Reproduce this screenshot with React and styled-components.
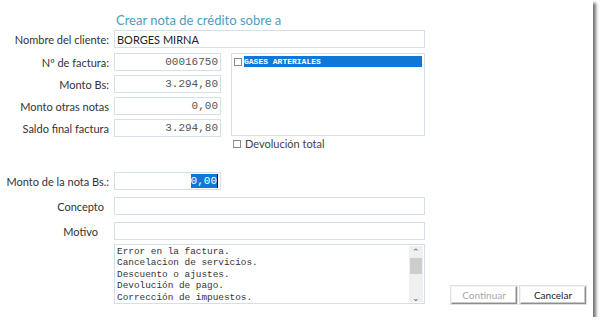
import React from 'react';
import styled, { createGlobalStyle } from 'styled-components';

const Global = createGlobalStyle`
  html, body { margin: 0; background: #fff; }
  body { font-family: "Lato", "Noto Sans", sans-serif; }
`;

const motivos = [
  'Error en la factura.',
  'Cancelacion de servicios.',
  'Descuento o ajustes.',
  'Devolución de pago.',
  'Corrección de impuestos.',
];

const amounts = [
  { label: 'Nº de factura:', value: '00016750' },
  { label: 'Monto Bs:', value: '3.294,80' },
  { label: 'Monto otras notas', value: '0,00' },
  { label: 'Saldo final factura', value: '3.294,80' },
];

export default function App() {
  return (
    <>
      <Global />
      <Window>
        <Title>Crear nota de crédito sobre a</Title>
        <Row>
          <Label>Nombre del cliente:</Label>
          <TextBox wide>BORGES MIRNA</TextBox>
        </Row>
        <Upper>
          <Column>
            {amounts.map((a) => (
              <Row key={a.label}>
                <Label>{a.label}</Label>
                <NumberBox>{a.value}</NumberBox>
              </Row>
            ))}
          </Column>
          <Side>
            <ListBox>
              <ListItem>
                <SmallCheck />
                <Selected>GASES ARTERIALES</Selected>
              </ListItem>
            </ListBox>
            <CheckRow>
              <SmallCheck />
              <span>Devolución total</span>
            </CheckRow>
          </Side>
        </Upper>
        <Lower>
          <Row>
            <Label>Monto de la nota Bs.:</Label>
            <NumberBox>
              <Highlight>0,0</Highlight>
              <Highlight last>0</Highlight>
            </NumberBox>
          </Row>
          <Row>
            <Label pad={5}>Concepto</Label>
            <TextBox wide />
          </Row>
          <Row>
            <Label pad={11}>Motivo</Label>
            <TextBox wide />
          </Row>
          <Bottom>
            <TextArea>
              <Lines>
                {motivos.map((m) => (
                  <div key={m}>{m}</div>
                ))}
              </Lines>
              <ScrollBar>
                <Arrow>⌃</Arrow>
                <Thumb />
                <Spacer />
                <Arrow>⌄</Arrow>
              </ScrollBar>
            </TextArea>
            <Buttons>
              <Button disabled>Continuar</Button>
              <Button>Cancelar</Button>
            </Buttons>
          </Bottom>
        </Lower>
      </Window>
    </>
  );
}

const Window = styled.div`
  width: 593px;
  height: 317px;
  box-sizing: border-box;
  background: #fff;
  box-shadow: 3px 3px 3px rgba(0, 0, 0, 0.55);
  padding: 12px 0 0 0;
  display: flex;
  flex-direction: column;
`;

const Title = styled.div`
  margin-left: 116px;
  color: #4a9fbc;
  font-size: 13px;
  line-height: 16px;
  margin-bottom: 2px;
`;

const Row = styled.div`
  display: flex;
  align-items: center;
  height: 18px;
`;

const Label = styled.div`
  width: 114px;
  box-sizing: border-box;
  padding-right: ${(p) => (p.pad || 0) + 5}px;
  text-align: right;
  font-size: 11px;
  color: #333;
  white-space: nowrap;
`;

const Field = styled.div`
  box-sizing: border-box;
  height: 18px;
  border: 1px solid #d6dee6;
  background: #fff;
  display: flex;
  align-items: center;
`;

const TextBox = styled(Field)`
  width: ${(p) => (p.wide ? 311 : 107)}px;
  padding-left: 2px;
  font-size: 11px;
  color: #222;
`;

const NumberBox = styled(Field)`
  width: 107px;
  justify-content: flex-end;
  padding-right: 2px;
  font-family: "Liberation Mono", monospace;
  font-size: 11px;
  color: #555;
`;

const Highlight = styled.span`
  background: #0f78d6;
  color: #fff;
  line-height: 14px;
  ${(p) => p.last && 'border-right: 1px solid #111;'}
`;

const Upper = styled.div`
  display: flex;
  margin-top: 5px;
`;

const Column = styled.div`
  display: flex;
  flex-direction: column;
  gap: 4px;
`;

const Side = styled.div`
  margin-left: 10px;
  display: flex;
  flex-direction: column;
`;

const ListBox = styled.div`
  width: 194px;
  height: 83px;
  box-sizing: border-box;
  border: 1px solid #d6dee6;
  padding: 2px 2px 0 2px;
`;

const ListItem = styled.div`
  display: flex;
  align-items: center;
  height: 11px;
`;

const SmallCheck = styled.span`
  display: inline-block;
  width: 8px;
  height: 8px;
  box-sizing: border-box;
  border: 1px solid #8a8a8a;
  background: #fff;
  margin-right: 2px;
`;

const Selected = styled.span`
  flex: 1;
  background: #0f78d6;
  color: #fff;
  font-family: "Liberation Mono", monospace;
  font-weight: bold;
  font-size: 8px;
  line-height: 11px;
`;

const CheckRow = styled.div`
  display: flex;
  align-items: center;
  margin-top: 1px;
  margin-left: 2px;
  font-size: 11px;
  color: #444;
  & > span:first-child { margin-right: 4px; }
`;

const Lower = styled.div`
  margin-top: 22px;
  display: flex;
  flex-direction: column;
  gap: 7px;
`;

const Bottom = styled.div`
  display: flex;
  align-items: flex-end;
  margin-top: -3px;
`;

const TextArea = styled.div`
  margin-left: 114px;
  width: 311px;
  height: 60px;
  box-sizing: border-box;
  border: 1px solid #d6dee6;
  display: flex;
`;

const Lines = styled.div`
  flex: 1;
  padding: 1px 0 0 2px;
  font-family: "Liberation Mono", monospace;
  font-size: 9.4px;
  line-height: 11.4px;
  color: #333;
`;

const ScrollBar = styled.div`
  width: 14px;
  margin: 1px 1px 1px 0;
  background: #f0f0f0;
  display: flex;
  flex-direction: column;
  align-items: center;
`;

const Arrow = styled.div`
  height: 10px;
  font-size: 9px;
  line-height: 12px;
  color: #606060;
`;

const Thumb = styled.div`
  width: 12px;
  height: 16px;
  background: #cdcdcd;
  margin-top: 2px;
`;

const Spacer = styled.div`
  flex: 1;
`;

const Buttons = styled.div`
  display: flex;
  gap: 3px;
  margin-left: 26px;
`;

const Button = styled.button`
  width: 66px;
  height: 18px;
  padding: 0;
  background: #fff;
  border: 1px solid;
  border-color: #f4f4f4 #8d8d8d #8d8d8d #f4f4f4;
  box-shadow: inset -1px -1px 0 #c8c8c8, 0 0 0 1px #e0e0e0;
  font-family: "Lato", "Noto Sans", sans-serif;
  font-size: 10px;
  color: #222;
  &:disabled { color: #a8a8a8; }
`;
